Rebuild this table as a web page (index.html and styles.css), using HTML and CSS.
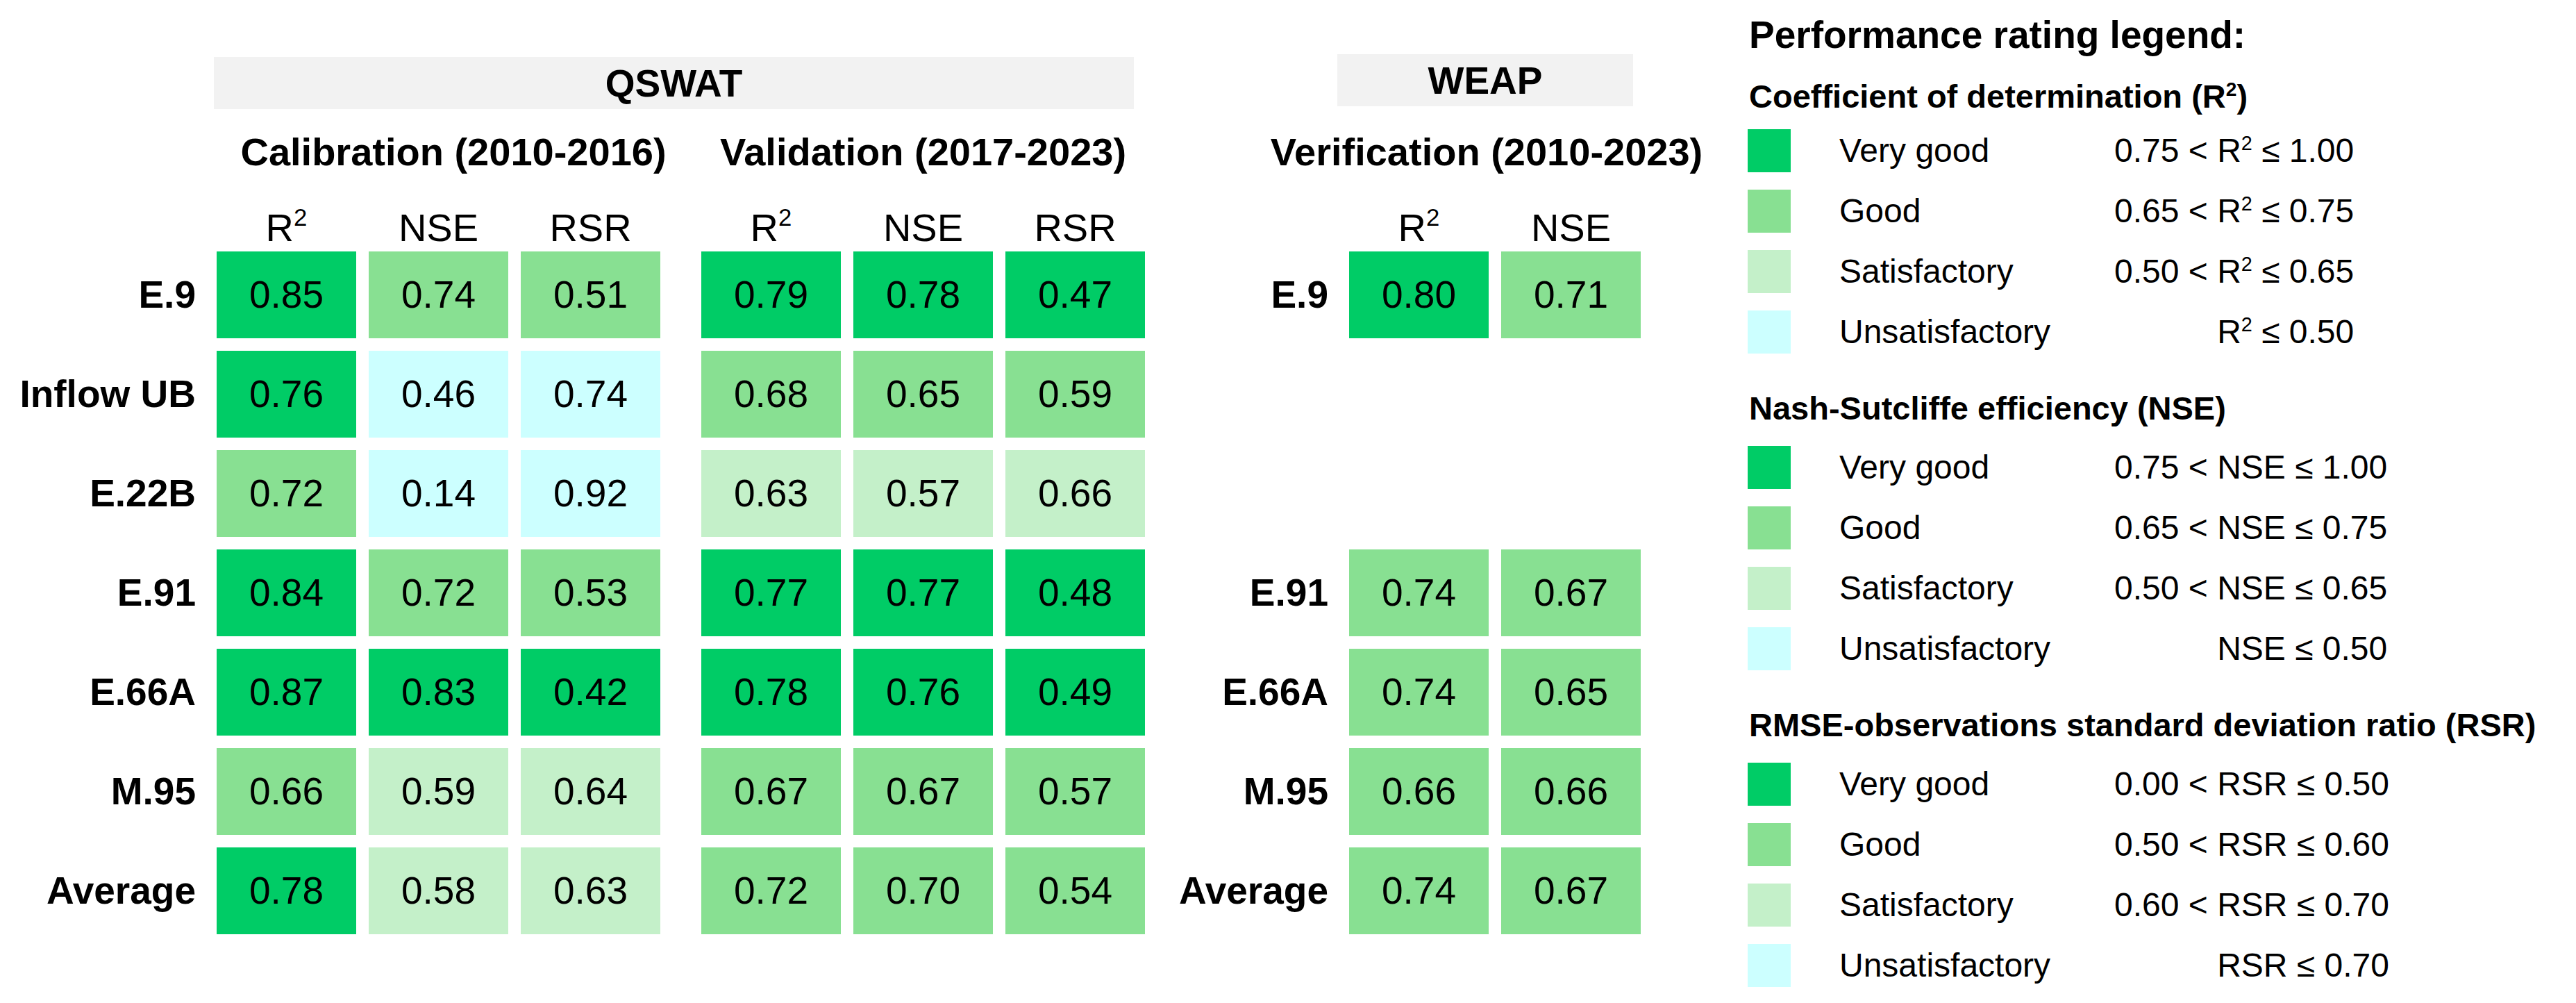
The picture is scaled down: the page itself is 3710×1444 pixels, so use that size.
FILE: index.html
```html
<!DOCTYPE html>
<html>
<head>
<meta charset="utf-8">
<link rel="stylesheet" href="styles.css">
</head>
<body>
<div class="page">
  <div class="table">
    <div class="grid band-row">
      <div class="band band-qswat">QSWAT</div>
      <div class="band band-weap">WEAP</div>
    </div>
    <div class="grid title-row">
      <div class="period period-cal">Calibration (2010-2016)</div>
      <div class="period period-val">Validation (2017-2023)</div>
      <div class="period period-ver">Verification (2010-2023)</div>
    </div>
    <div class="grid head-row">
      <div class="colhead c1">R<sup>2</sup></div>
      <div class="colhead c2">NSE</div>
      <div class="colhead c3">RSR</div>
      <div class="colhead c4">R<sup>2</sup></div>
      <div class="colhead c5">NSE</div>
      <div class="colhead c6">RSR</div>
      <div class="colhead c7">R<sup>2</sup></div>
      <div class="colhead c8">NSE</div>
    </div>
    <div class="rows">
      <div class="grid data-row">
        <div class="label l1">E.9</div>
        <div class="cell c1 vg">0.85</div><div class="cell c2 g">0.74</div><div class="cell c3 g">0.51</div>
        <div class="cell c4 vg">0.79</div><div class="cell c5 vg">0.78</div><div class="cell c6 vg">0.47</div>
        <div class="label l2">E.9</div>
        <div class="cell c7 vg">0.80</div><div class="cell c8 g">0.71</div>
      </div>
      <div class="grid data-row">
        <div class="label l1">Inflow UB</div>
        <div class="cell c1 vg">0.76</div><div class="cell c2 u">0.46</div><div class="cell c3 u">0.74</div>
        <div class="cell c4 g">0.68</div><div class="cell c5 g">0.65</div><div class="cell c6 g">0.59</div>
      </div>
      <div class="grid data-row">
        <div class="label l1">E.22B</div>
        <div class="cell c1 g">0.72</div><div class="cell c2 u">0.14</div><div class="cell c3 u">0.92</div>
        <div class="cell c4 s">0.63</div><div class="cell c5 s">0.57</div><div class="cell c6 s">0.66</div>
      </div>
      <div class="grid data-row">
        <div class="label l1">E.91</div>
        <div class="cell c1 vg">0.84</div><div class="cell c2 g">0.72</div><div class="cell c3 g">0.53</div>
        <div class="cell c4 vg">0.77</div><div class="cell c5 vg">0.77</div><div class="cell c6 vg">0.48</div>
        <div class="label l2">E.91</div>
        <div class="cell c7 g">0.74</div><div class="cell c8 g">0.67</div>
      </div>
      <div class="grid data-row">
        <div class="label l1">E.66A</div>
        <div class="cell c1 vg">0.87</div><div class="cell c2 vg">0.83</div><div class="cell c3 vg">0.42</div>
        <div class="cell c4 vg">0.78</div><div class="cell c5 vg">0.76</div><div class="cell c6 vg">0.49</div>
        <div class="label l2">E.66A</div>
        <div class="cell c7 g">0.74</div><div class="cell c8 g">0.65</div>
      </div>
      <div class="grid data-row">
        <div class="label l1">M.95</div>
        <div class="cell c1 g">0.66</div><div class="cell c2 s">0.59</div><div class="cell c3 s">0.64</div>
        <div class="cell c4 g">0.67</div><div class="cell c5 g">0.67</div><div class="cell c6 g">0.57</div>
        <div class="label l2">M.95</div>
        <div class="cell c7 g">0.66</div><div class="cell c8 g">0.66</div>
      </div>
      <div class="grid data-row">
        <div class="label l1">Average</div>
        <div class="cell c1 vg">0.78</div><div class="cell c2 s">0.58</div><div class="cell c3 s">0.63</div>
        <div class="cell c4 g">0.72</div><div class="cell c5 g">0.70</div><div class="cell c6 g">0.54</div>
        <div class="label l2">Average</div>
        <div class="cell c7 g">0.74</div><div class="cell c8 g">0.67</div>
      </div>
    </div>
  </div>

  <div class="legend">
    <div class="legend-title">Performance rating legend:</div>

    <div class="group group-first">
      <div class="group-title">Coefficient of determination (R<sup class="sm">2</sup>)</div>
      <div class="items">
        <div class="swatch vg"></div><div class="item-label">Very good</div><div class="range">0.75 &lt; R<sup class="sm">2</sup> ≤ 1.00</div>
        <div class="swatch g"></div><div class="item-label">Good</div><div class="range">0.65 &lt; R<sup class="sm">2</sup> ≤ 0.75</div>
        <div class="swatch s"></div><div class="item-label">Satisfactory</div><div class="range">0.50 &lt; R<sup class="sm">2</sup> ≤ 0.65</div>
        <div class="swatch u"></div><div class="item-label">Unsatisfactory</div><div class="range range-end">R<sup class="sm">2</sup> ≤ 0.50</div>
      </div>
    </div>

    <div class="group">
      <div class="group-title">Nash-Sutcliffe efficiency (NSE)</div>
      <div class="items">
        <div class="swatch vg"></div><div class="item-label">Very good</div><div class="range">0.75 &lt; NSE ≤ 1.00</div>
        <div class="swatch g"></div><div class="item-label">Good</div><div class="range">0.65 &lt; NSE ≤ 0.75</div>
        <div class="swatch s"></div><div class="item-label">Satisfactory</div><div class="range">0.50 &lt; NSE ≤ 0.65</div>
        <div class="swatch u"></div><div class="item-label">Unsatisfactory</div><div class="range range-end">NSE ≤ 0.50</div>
      </div>
    </div>

    <div class="group">
      <div class="group-title">RMSE-observations standard deviation ratio (RSR)</div>
      <div class="items">
        <div class="swatch vg"></div><div class="item-label">Very good</div><div class="range">0.00 &lt; RSR ≤ 0.50</div>
        <div class="swatch g"></div><div class="item-label">Good</div><div class="range">0.50 &lt; RSR ≤ 0.60</div>
        <div class="swatch s"></div><div class="item-label">Satisfactory</div><div class="range">0.60 &lt; RSR ≤ 0.70</div>
        <div class="swatch u"></div><div class="item-label">Unsatisfactory</div><div class="range range-end">RSR ≤ 0.70</div>
      </div>
    </div>
  </div>
</div>
</body>
</html>
```

FILE: styles.css
```css
html, body {
  margin: 0;
  padding: 0;
  background: #ffffff;
}

body {
  font-family: "Liberation Sans", Arial, Helvetica, sans-serif;
  color: #000000;
}

.page {
  display: flex;
  align-items: flex-start;
  width: 3710px;
  height: 1444px;
  overflow: hidden;
}

/* ---------- table ---------- */
.table {
  width: 2363px;
  flex: none;
  padding-top: 78px;
}

.grid {
  display: grid;
  grid-template-columns: 294px 201px 201px 201px 23px 201px 201px 201px 258px 201px 201px;
  column-gap: 18px;
}

.c1 { grid-column: 2; }
.c2 { grid-column: 3; }
.c3 { grid-column: 4; }
.c4 { grid-column: 6; }
.c5 { grid-column: 7; }
.c6 { grid-column: 8; }
.c7 { grid-column: 10; }
.c8 { grid-column: 11; }
.l1 { grid-column: 1; }
.l2 { grid-column: 9; }

.band-row {
  height: 79px;
  align-items: start;
}

.band {
  background: #f2f2f2;
  height: 75px;
  display: flex;
  align-items: center;
  justify-content: center;
  font-weight: bold;
  font-size: 55px;
}

.band-qswat {
  grid-column: 2 / 9;
  margin-left: -4px;
  margin-right: 16px;
  margin-top: 4px;
}

.band-weap {
  grid-column: 10 / 12;
  margin-left: -17px;
  margin-right: 11px;
}

.title-row {
  margin-top: 30px;
}

.period {
  font-weight: bold;
  font-size: 56px;
  line-height: 64px;
  white-space: nowrap;
  display: flex;
  justify-content: center;
}

.period-cal { grid-column: 2 / 5; padding-left: 43px; }
.period-val { grid-column: 6 / 9; }
.period-ver { grid-column: 10 / 12; margin-right: 24px; }

.head-row {
  margin-top: 45px;
  margin-bottom: 2px;
}

.colhead {
  font-size: 56px;
  line-height: 64px;
  text-align: center;
  white-space: nowrap;
}

sup {
  font-size: 0.62em;
  line-height: 0;
  vertical-align: 0.62em;
}

.rows {
  display: flex;
  flex-direction: column;
  gap: 18px;
}

.data-row {
  height: 125px;
}

.cell {
  height: 125px;
  line-height: 125px;
  text-align: center;
  font-size: 55px;
}

.label {
  font-weight: bold;
  font-size: 55px;
  line-height: 125px;
  text-align: right;
  padding-right: 12px;
  white-space: nowrap;
}

/* rating colours */
.vg { background: #00cc66; }
.g  { background: #88e092; }
.s  { background: #c4f0c9; }
.u  { background: #ccffff; }

/* ---------- legend ---------- */
.legend {
  flex: none;
  margin-left: 154px;
  padding-top: 18px;
}

.legend-title {
  font-weight: bold;
  font-size: 55px;
  line-height: 64px;
  white-space: nowrap;
  padding-left: 2px;
}

.group {
  margin-top: 51px;
}

.group-title {
  font-weight: bold;
  font-size: 47px;
  line-height: 56px;
  white-space: nowrap;
  padding-left: 2px;
  margin-bottom: 26px;
}

.group-first {
  margin-top: 29px;
}

.group-first .group-title {
  margin-bottom: 19px;
}

.items {
  display: grid;
  grid-template-columns: 132px 396px max-content;
  row-gap: 25px;
  align-items: center;
}

.swatch {
  width: 62px;
  height: 62px;
}

.item-label,
.range {
  font-size: 48px;
  line-height: 62px;
  white-space: nowrap;
}

.range-end {
  justify-self: end;
}

.sm {
  font-size: 0.6em;
  vertical-align: 0.6em;
}
```
